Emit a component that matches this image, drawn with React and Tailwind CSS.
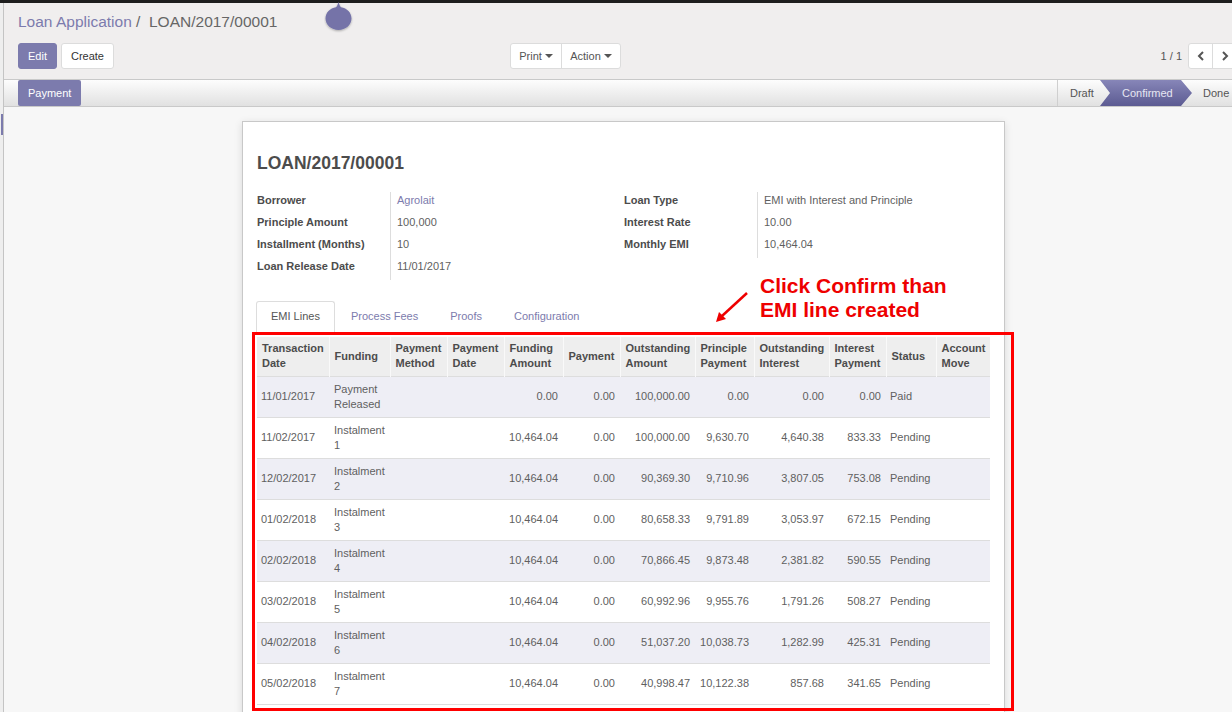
import React from 'react';

const rows = [
  ['11/01/2017', 'Payment', 'Released', '0.00', '0.00', '100,000.00', '0.00', '0.00', '0.00', 'Paid'],
  ['11/02/2017', 'Instalment', '1', '10,464.04', '0.00', '100,000.00', '9,630.70', '4,640.38', '833.33', 'Pending'],
  ['12/02/2017', 'Instalment', '2', '10,464.04', '0.00', '90,369.30', '9,710.96', '3,807.05', '753.08', 'Pending'],
  ['01/02/2018', 'Instalment', '3', '10,464.04', '0.00', '80,658.33', '9,791.89', '3,053.97', '672.15', 'Pending'],
  ['02/02/2018', 'Instalment', '4', '10,464.04', '0.00', '70,866.45', '9,873.48', '2,381.82', '590.55', 'Pending'],
  ['03/02/2018', 'Instalment', '5', '10,464.04', '0.00', '60,992.96', '9,955.76', '1,791.26', '508.27', 'Pending'],
  ['04/02/2018', 'Instalment', '6', '10,464.04', '0.00', '51,037.20', '10,038.73', '1,282.99', '425.31', 'Pending'],
  ['05/02/2018', 'Instalment', '7', '10,464.04', '0.00', '40,998.47', '10,122.38', '857.68', '341.65', 'Pending'],
];

const headers = [
  ['Transaction', 'Date'],
  ['Funding'],
  ['Payment', 'Method'],
  ['Payment', 'Date'],
  ['Funding', 'Amount'],
  ['Payment'],
  ['Outstanding', 'Amount'],
  ['Principle', 'Payment'],
  ['Outstanding', 'Interest'],
  ['Interest', 'Payment'],
  ['Status'],
  ['Account', 'Move'],
];

const widths = [72, 61, 57, 57, 59, 57, 75, 59, 75, 57, 50, 54];

function Caret() {
  return <span className="inline-block ml-[3px] align-middle border-x-[4px] border-x-transparent border-t-[4px] border-t-[#555]" />;
}

function Field({ label, value, link }) {
  return (
    <div className="flex h-[22px] items-center">
      <div className="w-[133px] font-bold text-[#4c4c4c]">{label}</div>
      <div className={`pl-[7px] ${link ? 'text-[#7c7bad]' : 'text-[#5f5f5f]'}`}>{value}</div>
    </div>
  );
}

export default function App() {
  return (
    <div className="relative w-[1232px] h-[712px] overflow-hidden bg-[#f7f7f7] text-[11px] font-['Liberation_Sans',Arial,sans-serif]">
      <div className="h-[3px] bg-[#1e1e1e]" />
      <div className="flex h-[709px]">
        {/* left edge */}
        <div className="relative w-[3px] bg-[#eeeeee] border-r border-[#c4c4c4] box-content">
          <div className="absolute left-[1px] top-[111px] w-[2px] h-[21px] bg-[#7c7bad]" />
        </div>

        <div className="flex-1 flex flex-col">
          {/* control panel */}
          <div className="bg-[#f0eeee] border-b border-[#c9c9c9] pl-[14px] pt-[9px] pb-[10px]">
            <div className="h-[20px] leading-[20px] text-[15.5px]">
              <span className="text-[#7c7bad]">Loan Application</span>
              <span className="text-[#666]"> /&nbsp; LOAN/2017/00001</span>
            </div>
            <div className="flex items-center mt-[11px] h-[26px]">
              <button className="h-[26px] px-[9px] rounded-[3px] bg-[#7c7bad] text-white border border-[#7c7bad]">Edit</button>
              <button className="h-[26px] ml-[4px] px-[9px] rounded-[3px] bg-white text-[#333] border border-[#dcdcdc]">Create</button>
              <div className="flex ml-[396px] h-[26px] rounded-[3px] border border-[#dcdcdc] bg-white text-[#555]">
                <div className="w-[51px] flex items-center justify-center border-r border-[#dcdcdc]">Print<Caret /></div>
                <div className="w-[58px] flex items-center justify-center">Action<Caret /></div>
              </div>
              <div className="ml-auto flex items-center -mr-[6px]">
                <span className="text-[#555] mr-[6px]">1 / 1</span>
                <div className="flex h-[26px] rounded-[3px] border border-[#dcdcdc] bg-white text-[#555]">
                  <div className="w-[24px] flex items-center justify-center border-r border-[#dcdcdc]">
                    <svg width="8" height="10" viewBox="0 0 8 10"><path d="M6 1 L2 5 L6 9" stroke="#555" strokeWidth="2" fill="none" /></svg>
                  </div>
                  <div className="w-[24px] flex items-center justify-center">
                    <svg width="8" height="10" viewBox="0 0 8 10"><path d="M2 1 L6 5 L2 9" stroke="#555" strokeWidth="2" fill="none" /></svg>
                  </div>
                </div>
              </div>
            </div>
          </div>

          {/* status bar */}
          <div className="h-[27px] flex bg-linear-to-b from-[#fdfdfd] to-[#e1e1e1] border-b border-[#c9c9c9] pl-[14px]">
            <button className="h-[26px] px-[10px] rounded-[2px] bg-[#7c7bad] text-white">Payment</button>
            <div className="ml-auto flex h-[26px] items-center -mr-[20px] border-l border-[#cfcfcf]">
              <div className="w-[42px] pl-[12px] text-[#555]">Draft</div>
              <div className="w-[92px] h-[26px] flex items-center pl-[22px] text-[#e6e6f2] bg-linear-to-b from-[#8786b8] to-[#5c5b92] [clip-path:polygon(0_0,81px_0,92px_50%,81px_100%,0_100%,10px_50%)]">Confirmed</div>
              <div className="w-[60px] pl-[11px] text-[#555]">Done</div>
            </div>
          </div>

          {/* sheet */}
          <div className="flex-1 overflow-hidden">
            <div className="ml-[238px] mt-[14px] w-[763px] h-[700px] bg-white border border-[#c8c8c8] shadow-[0_2px_8px_rgba(0,0,0,0.12)] pl-[14px] pr-[14px] pt-[31px]">
              <div className="text-[17.5px] leading-[20px] font-bold text-[#4c4c4c]">LOAN/2017/00001</div>
              <div className="flex mt-[16px]">
                <div className="relative w-[367px]">
                  <div className="absolute left-[133px] top-[3px] h-[88px] border-l border-[#dddddd]" />
                  <Field label="Borrower" value="Agrolait" link />
                  <Field label="Principle Amount" value="100,000" />
                  <Field label="Installment (Months)" value="10" />
                  <Field label="Loan Release Date" value="11/01/2017" />
                </div>
                <div className="relative flex-1">
                  <div className="absolute left-[133px] top-[3px] h-[66px] border-l border-[#dddddd]" />
                  <Field label="Loan Type" value="EMI with Interest and Principle" />
                  <Field label="Interest Rate" value="10.00" />
                  <Field label="Monthly EMI" value="10,464.04" />
                </div>
              </div>

              {/* tabs */}
              <div className="flex mt-[24px] -ml-[1px] border-b border-[#dddddd]">
                <div className="px-[14px] py-[7px] leading-[15px] border border-[#dddddd] border-b-white rounded-t-[3px] -mb-[1px] bg-white text-[#555]">EMI Lines</div>
                <div className="px-[15px] py-[7px] leading-[15px] border border-transparent text-[#7c7bad]">Process Fees</div>
                <div className="px-[15px] py-[7px] leading-[15px] border border-transparent text-[#7c7bad]">Proofs</div>
                <div className="px-[15px] py-[7px] leading-[15px] border border-transparent text-[#7c7bad]">Configuration</div>
              </div>

              <table className="mt-[4px] w-[733px] table-fixed border-collapse leading-[15px]">
                <colgroup>
                  {widths.map((w, i) => <col key={i} style={{ width: w }} />)}
                </colgroup>
                <thead>
                  <tr className="h-[39px] bg-[#eeeeee]">
                    {headers.map((h, i) => (
                      <th key={i} className={`text-left align-middle font-bold text-[#4c4c4c] pl-[5px] pr-[2px] ${i > 0 ? 'border-l border-[#f9f9f9]' : ''}`}>
                        {h[0]}{h[1] && <br />}{h[1]}
                      </th>
                    ))}
                  </tr>
                </thead>
                <tbody className="text-[#5f5f5f]">
                  {rows.map((r, i) => (
                    <tr key={i} className={`h-[41px] border-t border-[#dddddd] ${i % 2 === 0 ? 'bg-[#eeeef5]' : 'bg-white'}`}>
                      <td className="pl-[4px]">{r[0]}</td>
                      <td className="pl-[5px]">{r[1]}<br />{r[2]}</td>
                      <td />
                      <td />
                      <td className="text-right pr-[5px]">{r[3]}</td>
                      <td className="text-right pr-[5px]">{r[4]}</td>
                      <td className="text-right pr-[5px]">{r[5]}</td>
                      <td className="text-right pr-[5px]">{r[6]}</td>
                      <td className="text-right pr-[5px]">{r[7]}</td>
                      <td className="text-right pr-[5px]">{r[8]}</td>
                      <td className="pl-[4px]">{r[9]}</td>
                      <td />
                    </tr>
                  ))}
                  <tr className="border-t border-[#dddddd]"><td colSpan={12} className="h-[10px]" /></tr>
                </tbody>
              </table>
            </div>
          </div>
        </div>
      </div>

      {/* loading drop indicator */}
      <svg className="absolute left-[324px] top-[1px]" width="30" height="34" viewBox="0 0 30 34">
        <defs>
          <filter id="sh" x="-30%" y="-30%" width="160%" height="160%">
            <feDropShadow dx="0" dy="1" stdDeviation="1" floodOpacity="0.3" />
          </filter>
        </defs>
        <path d="M14.5 1 C15.5 4 16 5.5 17 6.2 C23 7.2 27.5 11.5 27.5 17.5 C27.5 24 21.5 29 14.5 29 C7.5 29 1.5 24 1.5 17.5 C1.5 11.5 6 7.2 12 6.2 C13 5.5 13.5 4 14.5 1 Z" fill="#7473a8" filter="url(#sh)" />
      </svg>

      {/* annotation */}
      <div className="absolute left-[760px] top-[274px] text-[21px] leading-[24px] font-bold text-[#ee0000]">
        Click Confirm than<br />EMI line created
      </div>
      <svg className="absolute left-[712px] top-[288px]" width="40" height="40" viewBox="0 0 40 40">
        <line x1="35" y1="5" x2="10" y2="28" stroke="#ee0000" strokeWidth="2.5" />
        <polygon points="4,34 7,24 14,31" fill="#ee0000" />
      </svg>
      <div className="absolute left-[252px] top-[332px] w-[762px] h-[379px] border-[3px] border-[#ff0000]" />
    </div>
  );
}
